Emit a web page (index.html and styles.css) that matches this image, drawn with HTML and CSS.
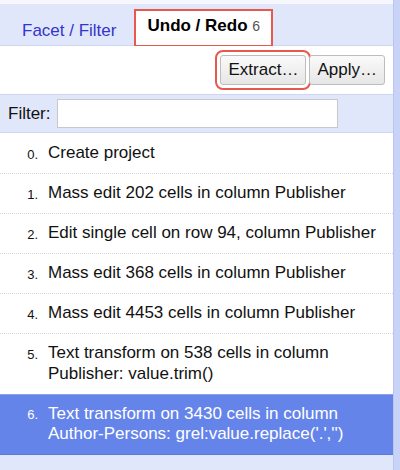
FILE: index.html
```html
<!DOCTYPE html>
<html>
<head>
<meta charset="utf-8">
<link rel="stylesheet" href="styles.css">
</head>
<body>
<div class="frame">
  <div class="panel">
    <div class="topstrip"></div>
    <div class="tabs">
      <div class="tab">Facet / Filter</div>
      <div class="tab active"><span class="tab-label">Undo / Redo</span> <span class="count">6</span></div>
    </div>
    <div class="toolbar">
      <button class="btn marked">Extract…</button>
      <button class="btn">Apply…</button>
    </div>
    <div class="filter">
      <label class="filter-label">Filter:</label>
      <input class="filter-input" type="text">
    </div>
    <ol class="history">
      <li class="entry"><span class="num">0.</span><span class="desc">Create project</span></li>
      <li class="entry"><span class="num">1.</span><span class="desc">Mass edit 202 cells in column Publisher</span></li>
      <li class="entry"><span class="num">2.</span><span class="desc">Edit single cell on row 94, column Publisher</span></li>
      <li class="entry"><span class="num">3.</span><span class="desc">Mass edit 368 cells in column Publisher</span></li>
      <li class="entry"><span class="num">4.</span><span class="desc">Mass edit 4453 cells in column Publisher</span></li>
      <li class="entry"><span class="num">5.</span><span class="desc">Text transform on 538 cells in column Publisher: value.trim()</span></li>
      <li class="entry current"><span class="num">6.</span><span class="desc">Text transform on 3430 cells in column Author-Persons: grel:value.replace('.','')</span></li>
    </ol>
    <div class="rest"></div>
  </div>
  <div class="edge"></div>
</div>
</body>
</html>
```
FILE: styles.css
```css
* { box-sizing: border-box; }
html, body { margin: 0; padding: 0; }
body {
  width: 400px;
  height: 470px;
  overflow: hidden;
  font-family: "Liberation Sans", Arial, sans-serif;
  color: #111;
  background: #e1e7fb;
}
.frame {
  display: flex;
  height: 470px;
}
.panel {
  width: 394px;
  display: flex;
  flex-direction: column;
  background: #e1e7fb;
  border-right: 1px solid #b9c6f2;
}
.edge {
  flex: 1;
  background: #c9d3f7;
}
.topstrip {
  height: 4px;
  background: #f6f8fe;
}
.tabs {
  height: 42px;
  display: flex;
  align-items: flex-end;
  padding-left: 13px;
  gap: 10px;
  border-bottom: 1px solid #cdd6f5;
}
.tab {
  font-size: 17px;
  color: #3434cc;
  padding: 0 9px 4px;
}
.tab.active {
  background: #fff;
  color: #000;
  font-weight: bold;
  padding: 6px 12px 8px;
  margin-bottom: -1px;
  outline: 2px solid #e8584c;
  outline-offset: -1px;
  height: 36px;
}
.count {
  font-weight: normal;
  font-size: 14px;
  color: #555;
}
.toolbar {
  height: 49px;
  background: #fff;
  display: flex;
  justify-content: flex-end;
  align-items: center;
  padding-right: 8px;
  gap: 3px;
  border-bottom: 1px solid #cdd6f5;
}
.btn {
  font-family: "Liberation Sans", Arial, sans-serif;
  font-size: 17px;
  color: #111;
  height: 30px;
  padding: 0 7px;
  border: 1px solid #bdbdbd;
  border-radius: 3px;
  background: linear-gradient(#fafafa, #e6e6e6);
}
.btn.marked {
  outline: 2px solid #e8584c;
  outline-offset: 3px;
  width: 86px;
}
.filter {
  height: 38px;
  display: flex;
  align-items: center;
  padding-left: 8px;
  gap: 6px;
  border-bottom: 1px solid #cdd6f5;
}
.filter-label {
  font-size: 17px;
  color: #111;
}
.filter-input {
  width: 281px;
  height: 29px;
  border: 1px solid #c8c8c8;
  background: #fff;
}
.history {
  list-style: none;
  margin: 0;
  padding: 0;
  background: #fff;
}
.entry {
  display: flex;
  align-items: flex-start;
  padding: 9px 8px 9.5px 0;
  line-height: 20.5px;
  font-size: 17px;
  border-top: 1px dotted #d8d8d8;
}
.entry:first-child { border-top: none; padding-top: 10px; }
.num {
  text-align: right;
  font-size: 13px;
  line-height: 19px;
  padding-top: 1.5px;
  padding-right: 10px;
  flex: none;
  width: 48px;
}
.desc { flex: 1; }
.entry.current {
  background: #6584e9;
  color: #fff;
  border-top: 1px solid #8aa2ee;
  border-bottom: 1px solid #5a78dd;
}
.rest { flex: 1; background: #e1e7fb; }
```
